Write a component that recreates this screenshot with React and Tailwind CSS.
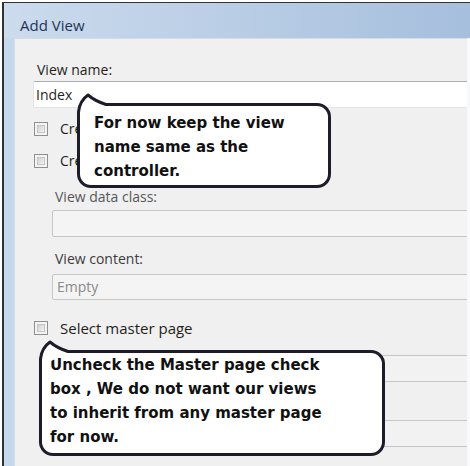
import React from "react";

const Check = () => (
  <span className="block w-[14px] h-[14px] shrink-0 border border-[#8f8f8f] bg-[#f4f4f4] p-[2px]">
    <span className="block w-full h-full border border-[#c4c4c4] bg-linear-to-br from-[#d2d2d2] to-[#f3f3f3]" />
  </span>
);

const Bubble = ({ className, textClass, children }) => (
  <div className={`absolute ${className}`}>
    <div
      className={`w-full h-full rounded-[14px] border-[3px] border-[#1c1c2b] bg-white text-[#111] font-['DejaVu_Sans',sans-serif] font-bold text-[15px] leading-[24px] ${textClass}`}
    >
      {children}
    </div>
    {/* tail of the callout */}
    <svg
      className="absolute left-[-2px] top-[-10px] overflow-visible"
      width="40"
      height="30"
      viewBox="-2 -10 40 30"
    >
      <path d="M3 18 L1.5 9 Q2.5 -2 11 -8 Q18 -2 29 1.5 L29 4 L7 13 Z" fill="white" />
      <path
        d="M1.5 17 L1.5 9 Q2.5 -2 11 -8 Q18 -2 29 1.5"
        fill="none"
        stroke="#1c1c2b"
        strokeWidth="3"
        strokeLinecap="round"
        strokeLinejoin="round"
      />
    </svg>
  </div>
);

export default function App() {
  return (
    <div className="relative w-[470px] h-[466px] overflow-hidden bg-white pl-[2px] pt-[2px] font-['Open_Sans',sans-serif]">
      <div className="flex flex-col h-full border-l-2 border-t border-[#333]">
        {/* title bar */}
        <div className="h-[35px] shrink-0 pl-[16px] pt-[12px] bg-linear-to-r from-[#ccdbed] to-[#a6bfdd]">
          <span className="block text-[15px] leading-[20px] text-[#1e3556]">Add View</span>
        </div>

        <div className="flex flex-1 bg-[#c6d8ec]">
          <div className="w-[10px] shrink-0" />
          <div className="flex-1 relative overflow-hidden bg-[#f0f0f0] border-l border-t border-[#d3dde8] pl-[18px] text-[14px] leading-[20px] text-[#1f1f1f]">
            <div className="mt-[21px] pl-[4px]">View name:</div>
            <div className="mt-[1px] h-[27px] w-[460px] bg-white border border-[#e1e6ec] border-t-[#abadb3] rounded-[2px] pl-[2px] flex items-center">
              Index
            </div>

            <div className="mt-[11px] flex items-center gap-[12px] pl-[1px] h-[20px]">
              <Check />
              <span>Create a partial view</span>
            </div>
            <div className="mt-[12px] flex items-center gap-[12px] pl-[1px] h-[20px]">
              <Check />
              <span>Create a strongly-typed view</span>
            </div>

            <div className="mt-[16px] pl-[22px] text-[#575757]">View data class:</div>
            <div className="ml-[19px] mt-[3px] h-[27px] w-[440px] bg-[#f4f4f4] border border-[#c6c6c6] rounded-[2px]" />

            <div className="mt-[12px] pl-[22px] text-[#3c3c3c]">View content:</div>
            <div className="ml-[19px] mt-[5px] h-[26px] w-[440px] bg-[#f4f4f4] border border-[#c6c6c6] rounded-[2px] pl-[4px] flex items-center text-[#8a8a8a]">
              Empty
            </div>

            <div className="mt-[18px] flex items-center gap-[12px] pl-[1px] h-[20px]">
              <Check />
              <span className="text-[15px]">Select master page</span>
            </div>
            <div className="ml-[19px] mt-[17px] h-[27px] w-[440px] bg-[#f2f2f2] border border-[#c6c6c6] rounded-[2px]" />
            <div className="ml-[19px] mt-[38px] h-[27px] w-[440px] bg-[#f2f2f2] border border-[#c6c6c6] rounded-[2px]" />
          </div>
          <div className="w-[3px] shrink-0 bg-[#f7f9fb]" />
        </div>
      </div>

      <Bubble className="left-[77px] top-[103px] w-[254px] h-[85px]" textClass="pl-[14px] pt-[5px]">
        For now keep the view
        <br />
        name same as the
        <br />
        controller.
      </Bubble>

      <Bubble className="left-[39px] top-[350px] w-[346px] h-[106px]" textClass="pl-[8px] pt-0">
        Uncheck the Master page check
        <br />
        box , We do not want our views
        <br />
        to inherit from any master page
        <br />
        for now.
      </Bubble>
    </div>
  );
}
